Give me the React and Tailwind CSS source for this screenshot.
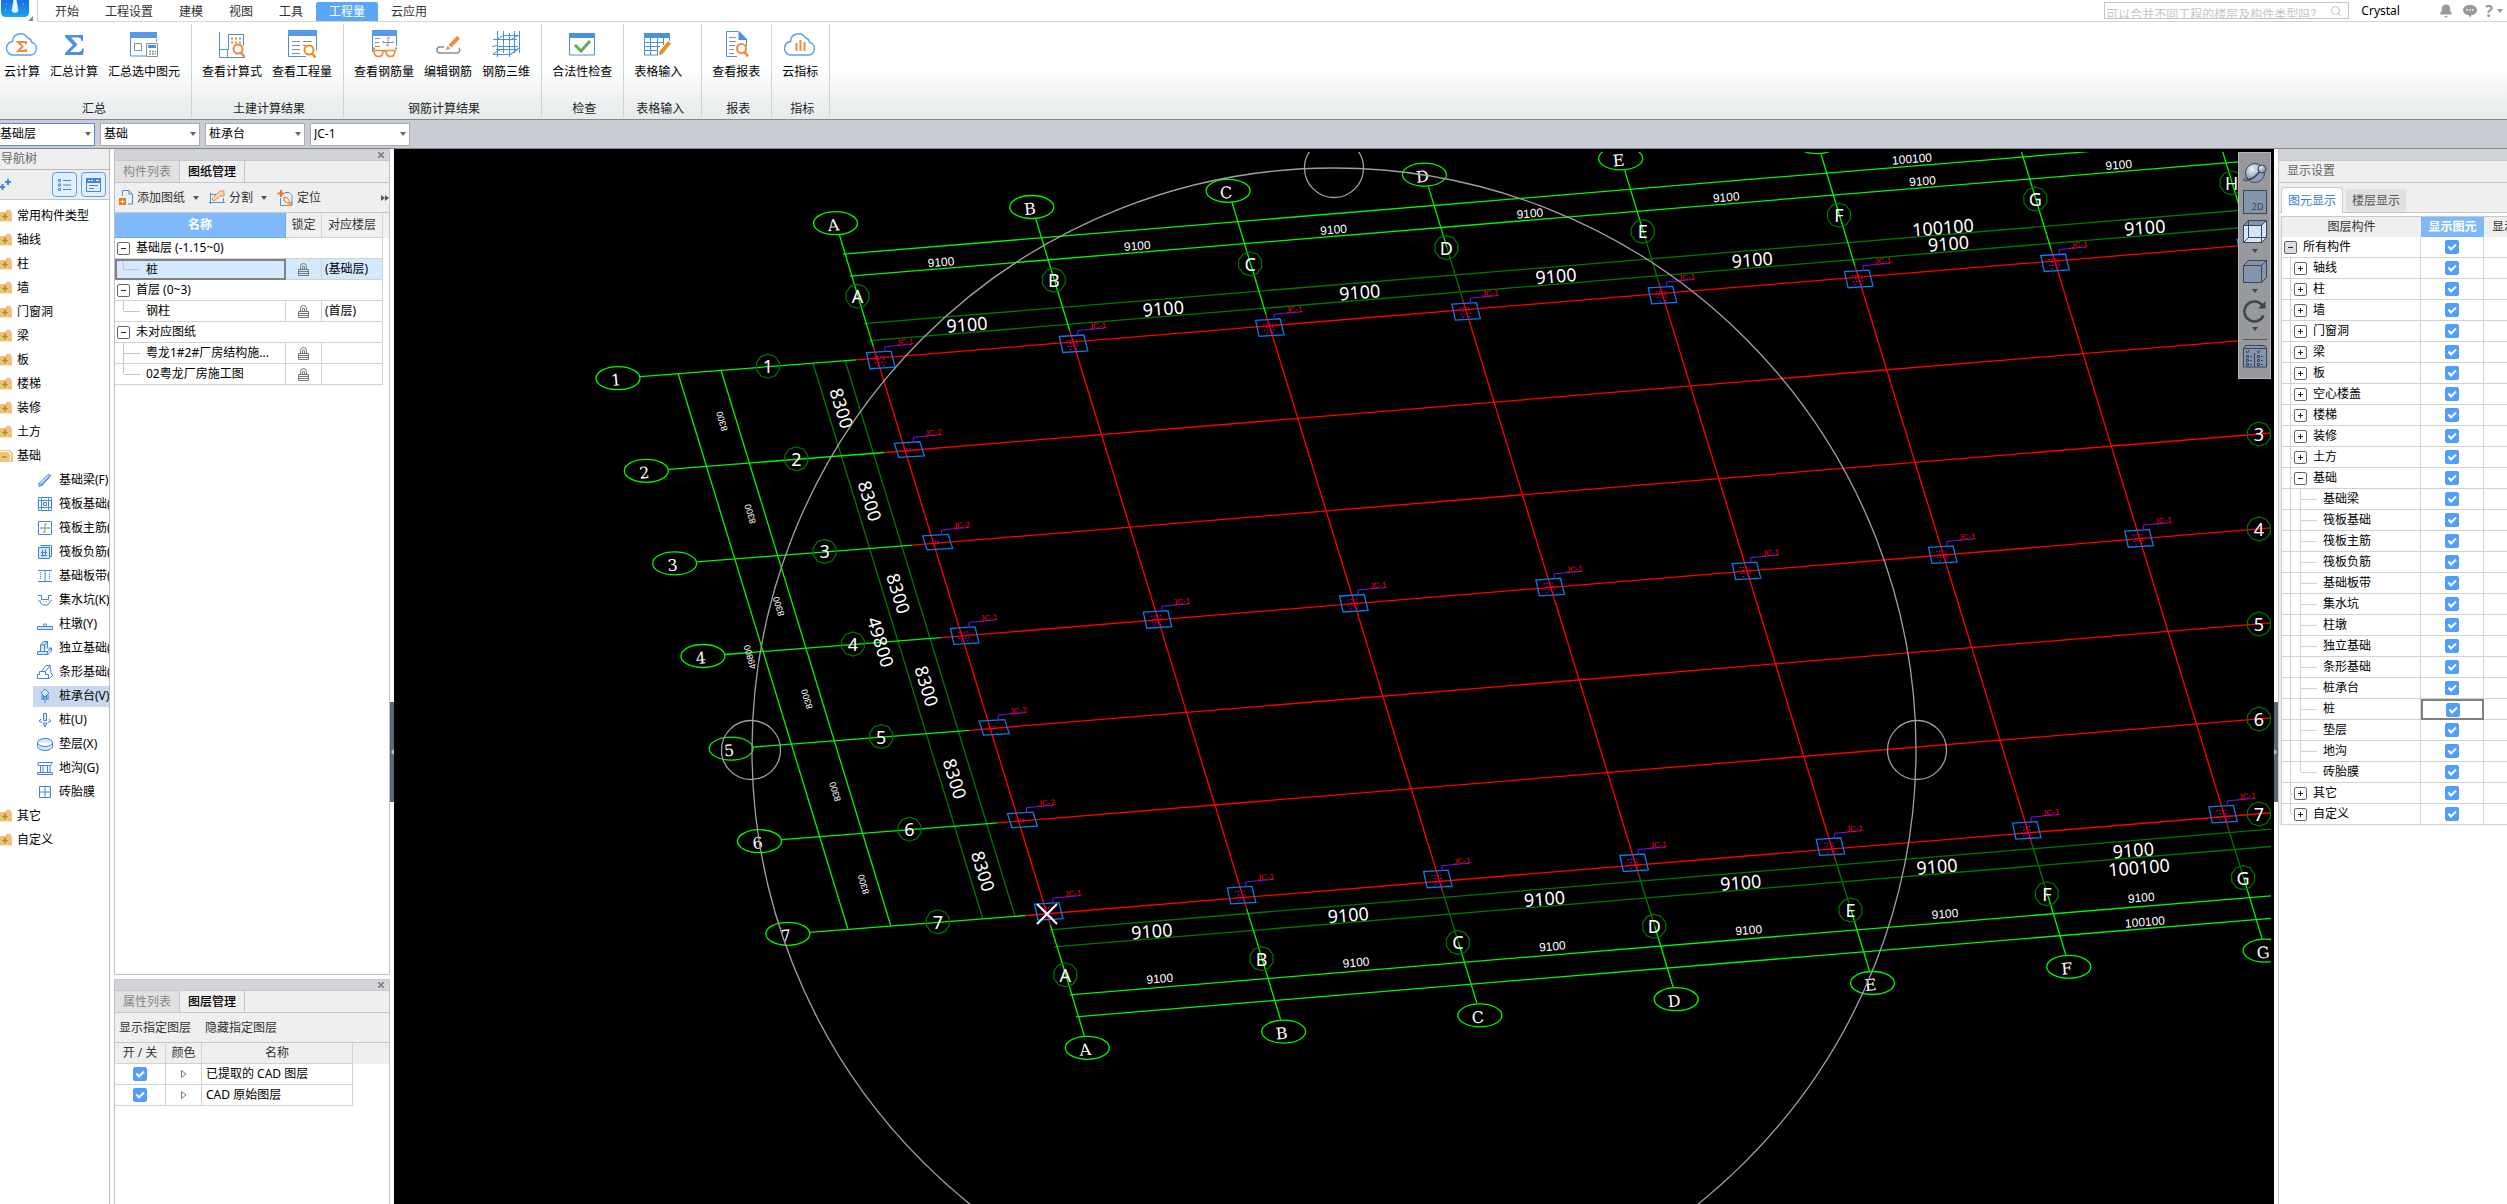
import React, { useState } from 'react';
import { Search, Bell } from 'lucide-react';

const BLUE = '#4a90e2';
const ORANGE = '#f08a3c';
const GRAY = '#8c8f94';

const menuTabs = ['开始', '工程设置', '建模', '视图', '工具', '工程量', '云应用'];

const ribbonGroups = [
  { title: '汇总', width: 'pl-1 pr-[11px]', items: [['云计算', 'cloudSum'], ['汇总计算', 'sigma'], ['汇总选中图元', 'sumSelected']] },
  { title: '土建计算结果', width: 'pl-2.5 pr-[11px]', items: [['查看计算式', 'formula'], ['查看工程量', 'quantity']] },
  { title: '钢筋计算结果', width: 'pl-2.5 pr-[11px]', items: [['查看钢筋量', 'rebar'], ['编辑钢筋', 'editRebar'], ['钢筋三维', 'rebar3d']] },
  { title: '检查', width: 'pl-2.5 pr-[11px]', items: [['合法性检查', 'check']] },
  { title: '表格输入', width: 'pl-2.5 pr-[19px]', items: [['表格输入', 'tableInput']] },
  { title: '报表', width: 'pl-2.5 pr-[11px]', items: [['查看报表', 'report']] },
  { title: '指标', width: 'pl-2.5 pr-[11px]', items: [['云指标', 'cloudIndex']] },
];

const navTop = ['常用构件类型', '轴线', '柱', '墙', '门窗洞', '梁', '板', '楼梯', '装修', '土方'];
const navChildren = [
  ['基础梁(F)', 'beam'],
  ['筏板基础(', 'raft'],
  ['筏板主筋(', 'mainBar'],
  ['筏板负筋(', 'negBar'],
  ['基础板带(', 'strip'],
  ['集水坑(K)', 'pit'],
  ['柱墩(Y)', 'pier'],
  ['独立基础(', 'isolated'],
  ['条形基础(', 'stripBase'],
  ['桩承台(V)', 'pileCap'],
  ['桩(U)', 'pile'],
  ['垫层(X)', 'cushion'],
  ['地沟(G)', 'trench'],
  ['砖胎膜', 'brick'],
];

const layerRows = [
  ['所有构件', 0],
  ['轴线', 1], ['柱', 1], ['墙', 1], ['门窗洞', 1], ['梁', 1], ['板', 1], ['空心楼盖', 1],
  ['楼梯', 1], ['装修', 1], ['土方', 1], ['基础', 1],
  ['基础梁', 2], ['筏板基础', 2], ['筏板主筋', 2], ['筏板负筋', 2], ['基础板带', 2],
  ['集水坑', 2], ['柱墩', 2], ['独立基础', 2], ['条形基础', 2], ['桩承台', 2],
  ['桩', 2], ['垫层', 2], ['地沟', 2], ['砖胎膜', 2],
  ['其它', 1], ['自定义', 1],
];

/* ---------- icons ---------- */

function Cloud() {
  return <path d="M8 27h16a6.500 6.500 0 0 0 1.500-12.800A5 5 0 0 0 21.500 10a8 8 0 0 0-15 3.500A6.700 6.700 0 0 0 8 27z" fill="none" stroke="#5aa2ee" strokeWidth="1.500" />;
}

function RibbonIcon({ name }) {
  return (
    <svg width="32" height="32" viewBox="0 0 32 32" fill="none" aria-hidden="true">
      {name === 'cloudSum' && (
        <>
          <Cloud />
          <path d="M20 16v-2h-8l4.500 4.500L12 23h8v-2" stroke={ORANGE} strokeWidth="2" />
        </>
      )}
      {name === 'sigma' && (
        <path d="M7 7h18v6h-1.500c-.5-2.500-1.500-3.500-4-3.500h-6.500l6.500 7-7.500 7.500h8c2.500 0 3.500-1 4.500-3.500H26L25 27H7v-2l8-8-8-8z" fill={BLUE} />
      )}
      {name === 'sumSelected' && (
        <>
          <path d="M2.500 4v24H18M28.500 11v3" stroke={BLUE} />
          <path d="M2 4h27v6H2z" fill="#5599ea" />
          <path d="M6.500 15.500h7v7h-7z" stroke={GRAY} />
          <path d="M18.500 15.500h11v13h-11z" fill="#fff" stroke={GRAY} />
          <path d="M20 17h8v3h-8z" fill={BLUE} />
          <path d="M21 23.500h2m1 0h2m1 0h1M21 26h2m1 0h2m1 0h1" stroke={GRAY} strokeWidth="1.500" />
        </>
      )}
      {name === 'formula' && (
        <>
          <path d="M3.500 4v25.500H29M3.500 21.500h8v8M12.500 22V6.500h15v11" stroke={BLUE} />
          <path d="M15 10.500h10M15 14.500h10" stroke={ORANGE} strokeWidth="2" strokeDasharray="2 2" />
          <circle cx="22" cy="21" r="4.500" stroke={ORANGE} strokeWidth="2" />
          <path d="M25 24.500l3.500 4.500" stroke={ORANGE} strokeWidth="2.500" />
        </>
      )}
      {name === 'quantity' && (
        <>
          <path d="M2.500 2.500h28v20M2.500 2.500v26H20" stroke={BLUE} />
          <path d="M2 2h29v6H2z" fill="#5599ea" />
          <path d="M6 13.500h8m3 0h9M6 17.500h8m3 0h3M6 21.500h8M6 25.500h8" stroke={GRAY} />
          <circle cx="23" cy="22" r="4.500" stroke="#ee9020" strokeWidth="2" />
          <path d="M26 25.500l3.500 4" stroke="#ee9020" strokeWidth="2.500" />
        </>
      )}
      {name === 'rebar' && (
        <>
          <path d="M4.500 2v22M28.500 2v16" stroke={BLUE} />
          <path d="M4 2h25v6H4z" fill="#5599ea" />
          <path d="M7 10.500h5M7 14.500h4M7 18.500h5M15 14.500h10M20 9v9m-5-3v-2m10 2v-2m-5-4l2 1m-2 8l-2-1" stroke={GRAY} />
          <path d="M5 20l2 1m22-1l-2 1M14 23h5" stroke={ORANGE} strokeWidth="2" />
          <path d="M6 22.500h9q0 6-4.500 6T6 22.500zM18 22.500h9q0 6-4.500 6t-4.500-6z" stroke={ORANGE} strokeWidth="1.700" />
        </>
      )}
      {name === 'editRebar' && (
        <>
          <path d="M12 19H8a3 3 0 0 0 0 6h17a3 3 0 0 0 2-5" stroke={GRAY} strokeWidth="1.500" />
          <path d="M25 8l3 2.500-8.500 9-3-2.500zM15.500 18l3 2.500-5 2z" fill={ORANGE} />
        </>
      )}
      {name === 'rebar3d' && (
        <path d="M7.500 3v26M13.500 3v22M24.500 3v22M29.500 3v22M19.500 5v24M3 26.500h17l8-5H6M3 11.500h24M7 11.500l6-4h17M3 26l8-5M7 18.500h21M2 19l6-2M20 27l9-7M20 12l9-5" stroke={BLUE} />
      )}
      {name === 'check' && (
        <>
          <path d="M3.500 5.500h25v21.500h-25z" stroke={BLUE} />
          <path d="M3 5h26v5H3z" fill={BLUE} />
          <path d="M9 17l6 6 9-10" stroke="#5fae57" strokeWidth="3" />
        </>
      )}
      {name === 'tableInput' && (
        <>
          <path d="M2.500 5.500h25V13M2.500 5.500v21.500H16M8.500 9v18M15.500 9v18M21.500 9v8M2 14.500h20M2 18.500h16M2 22.500h14" stroke={BLUE} />
          <path d="M2 5h26v5H2z" fill={BLUE} />
          <path d="M26 13l3 2.500-8.500 10.500-4 1.500 1-4z" fill="#ee9020" />
        </>
      )}
      {name === 'report' && (
        <>
          <path d="M18 3.500H6.500v25H17M26.500 18v-7l-7.500-7.500v8h7" stroke={BLUE} />
          <path d="M19 3.500l7.500 8H19z" fill={BLUE} />
          <path d="M9 9.500h7M9 13.500h7M9 17.500h6M9 21.500h5M9 25.500h5" stroke={GRAY} />
          <circle cx="21.500" cy="20.500" r="4.500" stroke={ORANGE} strokeWidth="2" />
          <path d="M24.500 24l3.500 4.500" stroke={ORANGE} strokeWidth="2.500" />
        </>
      )}
      {name === 'cloudIndex' && (
        <>
          <Cloud />
          <path d="M12.500 23v-8M16.500 23V12M20.500 23v-9" stroke={ORANGE} strokeWidth="2" />
        </>
      )}
    </svg>
  );
}

const treePaths = {
  beam: 'M2 11.500L11 2.500l3 1L5.500 13l-3.500 1.500zM2 11.500l3.500 1.500M5 12L13 3.500',
  raft: 'M1.500 1.500h13v13h-13zM1.500 4.500h13M1.500 11.500h13M4.500 1.500v13M11.500 1.500v13M6.500 6.500h3v3h-3z',
  mainBar: 'M1.500 1.500h13v13h-13z',
  negBar: 'M1.500 3.500h11v11h-11zM3.500 1.500h11v11h-2M4 8.500h6M4 11.500h6M5.500 6v7M8.500 5v7',
  strip: 'M1 2.500h14M1 13.500h14M8 3v10',
  pit: 'M1 3.500h3.500v4h7v-4H15M1.500 8l4 5h5l4-5',
  pier: 'M.5 10.500h15v3H.5z',
  isolated: 'M.5 11.500h10v3H.500zM3.500 11V5l3-3.500h4v7M3.500 5h4v6M7.500 5l3-3.500M10.500 11.500l4-3.500h-3M14.500 8v3l-4 3.500',
  stripBase: 'M.5 14.500v-4h2v-3h2L9 1.500h4l1 7 1.500 3-3 3zM4.500 7.500h4v3h3v4M8.500 7.500l4.500-6',
  pileCap: 'M8 1l4 4-4 4-4-4zM5 7v5M11 7v5M8 9v6M6.500 8v4M9.500 8v4',
  pile: 'M6.500 1.500h3v7h-3zM4 7l-2 2 3 1.500M12 7l2 2-3 1.500M6 11l2 4 2-4z',
  cushion: 'M.5 6.500a7.500 4 0 0 1 15 0a7.500 4 0 0 1-15 0v4a7.500 4 0 0 0 15 0v-4',
  trench: 'M1 2.500h14.500l-2 3H1zM3.500 5.500v7M6 5.500v7M10.500 5.500v7M13 5.500v7M.5 12.500h15v2H.5z',
  brick: 'M2.500 2.500h11v11h-11zM8 2.500v11M2.500 8h11',
};

function TreeIcon({ name }) {
  const filled = ['beam', 'negBar', 'isolated', 'pileCap', 'cushion', 'pier', 'pile'].includes(name);
  return (
    <svg width="16" height="16" viewBox="0 0 16 16" className="shrink-0" fill={filled ? '#d3e5fa' : 'none'} stroke="#3f86dc" aria-hidden="true">
      <path d={treePaths[name]} />
      {name === 'mainBar' && <path d="M3.500 8h9M8 3.500v9M4 7v2M12 7v2M8 4h2M8 12H6" stroke={GRAY} />}
      {name === 'strip' && <path d="M3.500 4v8M12.500 4v8" strokeDasharray="1 1" />}
      {name === 'pit' && <path d="M3 8.500l3 1.500 4-.5 3-2" stroke={GRAY} strokeDasharray="1 2" />}
      {name === 'pier' && <path d="M6.500 10V8h3v2" stroke={GRAY} />}
    </svg>
  );
}

function Folder({ open }) {
  return (
    <svg width="13" height="14" viewBox="0 0 13 14" className="shrink-0" aria-hidden="true">
      <path d={open ? 'M0 1h10l3 3v9H0z' : 'M0 3h5l1.500-2H11v2h1v9.500H0z'} fill="#ecc377" />
      {open && <path d="M0 2.500h9v2h2L10 12" stroke="#fff" fill="none" />}
      <path d={open ? 'M2 8h5' : 'M2 7.500h6M5 4.500v6'} stroke="#b9892c" strokeWidth="1.500" />
    </svg>
  );
}

function Caret({ className = '' }) {
  return (
    <svg width="6" height="4" viewBox="0 0 6 4" className={className} aria-hidden="true">
      <path d="M0 0h6L3 4z" fill="currentColor" />
    </svg>
  );
}

function Lock() {
  return (
    <svg width="11" height="13" viewBox="0 0 11 13" className="mx-auto" fill="none" stroke="#777" aria-hidden="true">
      <path d="M2.500 6V3.500a3 3 0 0 1 6 0V6M4.500 6V4a1 1 0 0 1 2 0v2M.5 6.500h10v6H.5zM0 8.500h11M0 10.500h11" />
    </svg>
  );
}

function Expander({ open, dark }) {
  return (
    <button
      type="button"
      aria-label={open ? '折叠' : '展开'}
      className={`flex size-[13px] shrink-0 items-center justify-center rounded-xs border border-[#666] ${dark ? 'bg-[#ddd]' : 'bg-white'}`}
    >
      <svg width="5" height="5" viewBox="0 0 5 5" aria-hidden="true">
        <path d={open ? 'M0 2.500h5' : 'M0 2.500h5M2.500 0v5'} stroke="#222" />
      </svg>
    </button>
  );
}

function CheckBox({ label }) {
  const [on, setOn] = useState(true);
  return (
    <span className="grid size-3.5">
      <input
        type="checkbox"
        aria-label={label}
        checked={on}
        onChange={(e) => setOn(e.target.checked)}
        className="col-start-1 row-start-1 size-3.5 appearance-none rounded-xs border border-[#539dfb] bg-white checked:bg-[#539dfb]"
      />
      {on && (
        <svg viewBox="0 0 14 14" className="pointer-events-none col-start-1 row-start-1 size-3.5" fill="none" aria-hidden="true">
          <path d="M3.500 6.500l2.500 3 5-5" stroke="#fff" strokeWidth="2" />
        </svg>
      )}
    </span>
  );
}

/* ---------- top area ---------- */

function TopBar() {
  return (
    <header className="flex h-[22px] shrink-0 items-stretch bg-white">
      <div className="flex w-[38px] items-start border-r border-[#ccc]">
        <svg width="34" height="21" viewBox="0 0 34 21" aria-label="logo">
          <defs>
            <linearGradient id="logo" x1="0" y1="0" x2="0" y2="1">
              <stop offset="0" stopColor="#1a6fe0" />
              <stop offset="1" stopColor="#18a4ee" />
            </linearGradient>
          </defs>
          <path d="M1 0h28v12q0 5-5 5H6q-5 0-5-5z" fill="url(#logo)" />
          <path d="M13.500 0h3l2 11q-3.500 4-7 0z" fill="#e4f2fd" />
          <path d="M6 4h1M23 4h1M5 10h1" stroke="#9cd0fa" />
          <path d="M33 16v5h-5z" fill="#888" />
        </svg>
      </div>
      <nav className="flex grow items-end border-b border-[#d5d5d5] pl-1">
        {menuTabs.map((tab) => (
          <button
            type="button"
            key={tab}
            className={`h-[19px] px-[13px] leading-[18px] ${tab === '工程量' ? 'rounded-t-xs bg-[#5aa7f8] text-white' : 'text-[#333]'}`}
          >
            {tab}
          </button>
        ))}
      </nav>
      <div className="flex items-center border-b border-[#d5d5d5] pr-1 text-[#999]">
        <div className="flex h-[17px] w-[245px] items-center overflow-hidden border border-[#c4c4c4] bg-white pr-1.5">
          <input
            aria-label="搜索"
            placeholder="可以合并不同工程的楼层及构件类型吗？"
            className="h-[15px] min-w-0 grow pt-2 pl-px leading-4 outline-none placeholder:text-[#c4c4c4]"
          />
          <Search size={12} strokeWidth={2} className="text-[#bbb]" />
        </div>
        <span className="w-[90px] pl-3 text-black">Crystal</span>
        <Bell size={14} fill="#999" className="mr-2.5" />
        <svg width="14" height="14" viewBox="0 0 14 14" className="mr-2" aria-hidden="true">
          <path d="M7 1c4 0 7 2 7 5s-3 5-5.500 5L7 13.500 5.500 11C3 11 0 9 0 6s3-5 7-5z" fill="#999" />
          <path d="M3.500 6h1.500m1.300 0h1.500m1.300 0h1.500" stroke="#fff" strokeWidth="1.500" />
        </svg>
        <span className="text-base leading-5 font-bold">?</span>
        <Caret className="ml-1" />
      </div>
    </header>
  );
}

function Ribbon() {
  return (
    <div className="flex h-[98px] shrink-0 border-b border-[#85888e] bg-linear-to-b from-white from-45% to-[#e6eaea] pt-0.5 pb-0.5">
      {ribbonGroups.map((group) => (
        <section key={group.title} className={`flex flex-col justify-between border-r border-[#d0d2d4] ${group.width}`}>
          <div className="flex gap-2.5 pt-1">
            {group.items.map(([label, icon]) => (
              <button type="button" key={label} className="flex flex-col items-center gap-1 whitespace-nowrap text-black">
                <RibbonIcon name={icon} />
                <span className="leading-4">{label}</span>
              </button>
            ))}
          </div>
          <h2 className="-mr-1 text-center leading-4 text-[#222]">{group.title}</h2>
        </section>
      ))}
    </div>
  );
}

function FloorSelectors() {
  const fields = [['楼层', '基础层'], ['类别', '基础'], ['构件类型', '桩承台'], ['构件', 'JC-1']];
  return (
    <div className="flex h-[29px] shrink-0 items-center gap-[5px] border-b border-[#85888e] bg-[#c9ccd2]">
      {fields.map(([name, value], i) => (
        <div key={name} className="grid items-center">
          <select
            aria-label={name}
            className={`col-start-1 row-start-1 h-[23px] appearance-none border bg-white text-black ${i === 0 ? 'w-[95px] border-l-0 border-[#5b87de] pl-0' : 'w-[100px] border-[#a9abaf] pl-[3px]'}`}
          >
            <option>{value}</option>
          </select>
          <Caret className="pointer-events-none col-start-1 row-start-1 mr-1 justify-self-end text-[#666]" />
        </div>
      ))}
    </div>
  );
}

/* ---------- left side ---------- */

function NavTree() {
  return (
    <aside className="flex w-[110px] shrink-0 flex-col overflow-hidden border-r border-[#bbb] bg-white">
      <h2 className="h-[21px] shrink-0 border-b border-[#bbb] bg-[#eee] pl-px leading-5 text-[#666]">导航树</h2>
      <div className="flex h-[30px] shrink-0 items-center justify-end gap-1 border-b border-[#c4c4c4] bg-[#eee] pr-[3px]">
        <svg width="12" height="14" viewBox="0 0 12 14" className="mr-auto" aria-hidden="true">
          <path d="M5 4h6M8 1v6M0 9h5M2.500 6v6" stroke="#3f86dc" strokeWidth="2" />
        </svg>
        <button type="button" aria-label="列表" className="flex size-[25px] items-center justify-center rounded-sm border border-[#539dfb] bg-[#e2effd]">
          <svg width="13" height="14" viewBox="0 0 13 14" fill="none" stroke="#3f86dc" aria-hidden="true">
            <path d="M.5 1.500h2v2h-2zM.5 6h2v2h-2zM.5 10.500h2v2h-2zM5 2.500h8M5 7h8M5 11.500h8" />
          </svg>
        </button>
        <button type="button" aria-label="窗口" className="flex size-[25px] items-center justify-center rounded-sm border border-[#539dfb] bg-[#e2effd]">
          <svg width="15" height="14" viewBox="0 0 15 14" fill="none" stroke="#3f86dc" aria-hidden="true">
            <path d="M.5 .5h14v13H.5zM3 7.500h9M3 10.500h5" />
            <path d="M0 0h15v5H0z" fill="#3f86dc" stroke="none" />
            <path d="M2 2.500h2m1 0h2m3 0h3" stroke="#fff" />
          </svg>
        </button>
      </div>
      <ul className="pt-1 whitespace-nowrap text-black">
        {navTop.map((item) => (
          <li key={item} className="flex h-6 items-center gap-1"><Folder />{item}</li>
        ))}
        <li>
          <div className="flex h-6 items-center gap-1"><Folder open />基础</div>
          <ul>
            {navChildren.map(([label, icon]) => (
              <li key={icon} className="flex h-6 items-center pl-[33px]">
                <span className={`flex h-[21px] grow items-center gap-1.5 pl-1 ${icon === 'pileCap' ? 'bg-[#c8d8ef]' : ''}`}>
                  <TreeIcon name={icon} />{label}
                </span>
              </li>
            ))}
          </ul>
        </li>
        <li className="flex h-6 items-center gap-1"><Folder />其它</li>
        <li className="flex h-6 items-center gap-1"><Folder />自定义</li>
      </ul>
    </aside>
  );
}

function PanelHead({ tabs }) {
  return (
    <>
      <div className="flex h-3 shrink-0 items-center justify-end border-y border-t-[#c6c8ce] border-b-[#c6c8ce] bg-[#d3d4da] pr-[5px]">
        <button type="button" aria-label="关闭">
          <svg width="6" height="6" viewBox="0 0 6 6" aria-hidden="true"><path d="M0 0l6 6M6 0L0 6" stroke="#777" strokeWidth="1.500" /></svg>
        </button>
      </div>
      <div className="flex h-[22px] shrink-0 border-b border-[#c4c6cc] bg-[#efefef]">
        {tabs.map((tab, i) => (
          <button type="button" key={tab} className={`w-[65px] border-r border-[#c4c6cc] ${i === 0 ? 'bg-[#e1e1e1] text-[#888]' : 'font-medium text-black'}`}>
            {tab}
          </button>
        ))}
      </div>
    </>
  );
}

const cell = 'h-[21px] border-r border-b border-[#d2d2d2]';

function DrawingTable() {
  const groups = [
    { title: '基础层 (-1.15~0)', rows: [['桩', '(基础层)']] },
    { title: '首层 (0~3)', rows: [['钢柱', '(首层)']] },
    { title: '未对应图纸', rows: [['粤龙1#2#厂房结构施...', ''], ['02粤龙厂房施工图', '']] },
  ];
  return (
    <div className="bg-linear-to-b from-[#efefef] from-[25px] to-white to-[25px]">
      <table className="w-[268px] table-fixed border-separate border-spacing-0 text-black">
        <colgroup><col className="w-[171px]" /><col className="w-9" /><col className="w-[61px]" /></colgroup>
        <thead>
          <tr className="text-[#333]">
            <th className="h-[25px] border-r border-b border-[#6fa9ec] bg-[#7fb9fb] text-white">名称</th>
            <th className="border-r border-b border-[#d2d2d2] bg-[#efefef] font-normal">锁定</th>
            <th className="border-r border-b border-[#d2d2d2] bg-[#efefef] font-normal">对应楼层</th>
          </tr>
        </thead>
        {groups.map((group, g) => (
          <tbody key={group.title}>
            <tr>
              <td colSpan={3} className={cell}>
                <div className="flex items-center gap-1.5 pl-0.5"><Expander open />{group.title}</div>
              </td>
            </tr>
            {group.rows.map(([name, floor], i) => (
              <tr key={name} className={g === 0 ? 'bg-[#d5e9fe]' : ''}>
                <td className={g === 0 ? 'h-[21px] border-2 border-[#808080]' : cell}>
                  <div className={`flex items-stretch leading-4 whitespace-nowrap ${g === 0 ? 'h-[17px] pl-1.5' : 'h-5 pl-2'}`}>
                    <span className={`w-px bg-[#c4c4c4] ${i === group.rows.length - 1 ? 'h-1/2' : ''}`} />
                    <span className="h-px w-4 self-center bg-[#c4c4c4]" />
                    <span className="self-center pl-1.5">{name}</span>
                  </div>
                </td>
                <td className={cell}><Lock /></td>
                <td className={`${cell} pl-[3px] leading-4`}>{floor}</td>
              </tr>
            ))}
          </tbody>
        ))}
      </table>
    </div>
  );
}

function DrawingPanel() {
  return (
    <section className="flex min-h-0 grow flex-col border-x border-b border-[#bfc0c4] bg-white">
      <PanelHead tabs={['构件列表', '图纸管理']} />
      <div className="flex h-[30px] shrink-0 items-center border-b border-[#c8c8c8] bg-[#efefef] pl-1 text-[#333]">
        <button type="button" className="flex items-center gap-1">
          <svg width="14" height="15" viewBox="0 0 14 15" fill="none" aria-hidden="true">
            <path d="M3.500 6V.5H10l3.500 3.500v10H9M10 .5V4h3" stroke={BLUE} />
            <path d="M0 8h7v7H0z" fill="#ee7623" /><path d="M1.500 11.500h4M3.500 9.500v4" stroke="#fff" />
          </svg>
          添加图纸<Caret className="ml-1 text-[#555]" />
        </button>
        <button type="button" className="ml-2.5 flex items-center gap-1">
          <svg width="16" height="15" viewBox="0 0 16 15" fill="none" aria-hidden="true">
            <path d="M1.500 12.500v-8h8M14.500 8v4.500H1.500M0 12.500h16M1.500 14V3" stroke={BLUE} />
            <path d="M3 9l6-6 2-2h4v5h-4L5 11z" fill="#fbd9b8" stroke={ORANGE} />
          </svg>
          分割<Caret className="ml-1 text-[#555]" />
        </button>
        <button type="button" className="ml-2.5 flex items-center gap-1">
          <svg width="16" height="16" viewBox="0 0 16 16" fill="none" aria-hidden="true">
            <path d="M8 2.500h4l3 3v9.500M3.500 8v7.500h4" stroke={BLUE} />
            <path d="M4 0v7M.5 3.500h7" stroke="#ee7623" strokeWidth="2" />
            <path d="M7 7.500a4 4 0 0 1 5 5h2.500v3H7M7 7v4l7 4" stroke="#ee7623" />
          </svg>
          定位
        </button>
        <svg width="8" height="6" viewBox="0 0 8 6" className="ml-auto" aria-label="更多"><path d="M0 0l4 3-4 3zM4 0l4 3-4 3z" fill="#555" /></svg>
      </div>
      <DrawingTable />
    </section>
  );
}

function LayerPanel() {
  return (
    <section className="mt-1 flex h-[225px] shrink-0 flex-col border-x border-[#bfc0c4] bg-white">
      <PanelHead tabs={['属性列表', '图层管理']} />
      <div className="flex h-[30px] shrink-0 items-center gap-3.5 border-b border-[#c8c8c8] bg-[#efefef] pl-1 text-[#333]">
        <button type="button">显示指定图层</button>
        <button type="button">隐藏指定图层</button>
      </div>
      <div className="bg-linear-to-b from-[#efefef] from-[21px] to-white to-[21px]">
        <table className="w-[238px] table-fixed border-separate border-spacing-0 text-black">
          <colgroup><col className="w-[51px]" /><col className="w-9" /><col className="w-[151px]" /></colgroup>
          <thead>
            <tr className="text-[#333]">
              {['开 / 关', '颜色', '名称'].map((h) => <th key={h} className={`${cell} bg-[#efefef] leading-4 font-normal`}>{h}</th>)}
            </tr>
          </thead>
          <tbody>
            {['已提取的 CAD 图层', 'CAD 原始图层'].map((name) => (
              <tr key={name}>
                <td className={cell}><div className="flex justify-center"><CheckBox label={name} /></div></td>
                <td className={cell}>
                  <svg width="6" height="8" viewBox="0 0 6 8" className="mx-auto" aria-hidden="true"><path d="M.5 .5l4.500 3.500-4.500 3.500z" fill="none" stroke="#777" /></svg>
                </td>
                <td className={`${cell} pl-1 leading-4`}>{name}</td>
              </tr>
            ))}
          </tbody>
        </table>
      </div>
    </section>
  );
}

function Splitter({ flip }) {
  return (
    <div className="flex w-1 shrink-0 flex-col bg-white">
      <div className="flex-[11]" />
      <button type="button" aria-label="收起" className="flex h-[100px] items-center bg-[#5f6875]">
        <svg width="4" height="6" viewBox="0 0 4 6" aria-hidden="true"><path d={flip ? 'M0 0l3 3-3 3z' : 'M4 0L1 3l3 3z'} fill="#c8ccd2" /></svg>
      </button>
      <div className="flex-[8]" />
    </div>
  );
}

/* ---------- drawing ---------- */

// grid intersection of column c and row r
const at = (c, r) => [877 + 196.3 * c + 28.3 * r, 358.2 - 16.2 * c + 92.6 * r];
const off = ([x, y], dx, dy) => [x + dx, y + dy];
const ROW_ANGLE = -4.7;
const COL_ANGLE = 73;
const cols = ['A', 'B', 'C', 'D', 'E', 'F', 'G', 'H'];
const rows = ['1', '2', '3', '4', '5', '6', '7'];
const LIME = '#00f800';
const DARK = '#007800';
const RED = '#ff0000';

function Line({ from, to, stroke }) {
  return <line x1={from[0]} y1={from[1]} x2={to[0]} y2={to[1]} stroke={stroke} strokeWidth="1.300" />;
}

function Label({ p, size, angle = 0, font = 'Noto Sans', fill = '#fff', children }) {
  return (
    <text
      x={p[0]} y={p[1]} fontSize={size} fill={fill} textAnchor="middle" dominantBaseline="central"
      transform={`rotate(${angle} ${p[0]} ${p[1]})`} fontFamily={`"${font}", "Liberation Sans", sans-serif`}
    >
      {children}
    </text>
  );
}

function InnerBubble({ p, name }) {
  const points = [...Array(10)].map((_, i) => {
    const a = (i * Math.PI) / 5 + 0.3;
    return `${p[0] + 12 * Math.cos(a)},${p[1] + 12 * Math.sin(a)}`;
  });
  return (
    <g>
      <polygon points={points.join(' ')} fill="none" stroke={DARK} strokeWidth="1.200" />
      <Label p={p} size={18}>{name}</Label>
    </g>
  );
}

function OuterBubble({ p, name }) {
  return (
    <g>
      <ellipse cx={p[0]} cy={p[1]} rx="22" ry="11.500" fill="none" stroke={LIME} strokeWidth="1.300" />
      <Label p={off(p, -2, 2)} size={16} angle={-5} font="DejaVu Serif">{name}</Label>
    </g>
  );
}

function PileCap({ c, r }) {
  const single = c === 0 && ![0, 3, 6].includes(r);
  const [x, y] = single ? off(at(c, r), 0, -2) : off(at(c, r), (c ? -3.5 : 0) - r * 0.3, -r * 0.7);
  return (
    <g transform={`translate(${x} ${y})`} fill="none">
      <path d={single ? 'M-11-5.500L14.500-7 19 7l-25.500 1.500z' : 'M-10.500-5.500L14-7l4 16-25 1.500z'} stroke="#0a7cf0" strokeWidth="1.300" />
      <path
        d={single ? 'M1 0h5M1 2h5' : 'M-3-1.500l10-.6M0 1.500h2M6 1.200h2M-2 4.500l11-.6M0 7.500h2M6 7h2'}
        stroke="#d800d8" strokeDasharray="1.500 1.500"
      />
      <path d="M8-6.500v-5l27-2.500" stroke="#7a10f0" />
      <Label p={[28, -16]} size={8} angle={ROW_ANGLE} font="Liberation Sans" fill={RED}>{single ? 'JC-2' : 'JC-1'}</Label>
    </g>
  );
}

function GridDrawing() {
  const caps = [];
  for (let c = 0; c < 8; c++) [0, 3, 6].forEach((r) => caps.push([c, r]));
  [1, 2, 4, 5].forEach((r) => caps.push([0, r]));

  return (
    <svg className="size-full" viewBox="397 152 1874 1052" preserveAspectRatio="xMinYMin slice" aria-label="轴网">
      {/* left dimension lines */}
      {[[-199, 15, LIME], [-156, 12, LIME], [-64, 5, DARK], [-32, 2, DARK]].map(([dx, dy, color]) => (
        <Line key={dx} from={off(at(0, 0), dx, dy)} to={off(at(0, 6), dx, dy)} stroke={color} />
      ))}
      {/* top and bottom dimension lines */}
      {[[-32, -104, LIME], [-25, -82, LIME], [-11, -34.500, DARK], [-5, -17.500, DARK]].map(([dx, dy, color]) => (
        <Line key={dy} from={off(at(0, 0), dx - 2, dy)} to={off(at(8, 0), dx, dy)} stroke={color} />
      ))}
      {[[5, 16, DARK], [9, 33, DARK], [25, 81, LIME], [31, 103, LIME]].map(([dx, dy, color]) => (
        <Line key={dy} from={off(at(0, 6), dx - 2, dy)} to={off(at(8, 6), dx, dy)} stroke={color} />
      ))}

      {rows.map((name, r) => (
        <g key={name}>
          <Line from={off(at(0, r), -237, 18.500)} to={off(at(0, r), -21, 1.700)} stroke={LIME} />
          <Line from={off(at(0, r), -21, 1.700)} to={at(8, r)} stroke={RED} />
          <OuterBubble p={off(at(0, r), -259, 20)} name={name} />
          <InnerBubble p={off(at(0, r), -109, 8)} name={name} />
          {r > 1 && <InnerBubble p={[2259, 434 + (r - 2) * 95]} name={name} />}
          {r < 6 && <Label p={off(at(0, r), -35, 50)} size={18} angle={COL_ANGLE}>8300</Label>}
          {r < 6 && <Label p={off(at(0, r), -155, 63)} size={9} angle={COL_ANGLE - 180} font="Liberation Sans Narrow">8300</Label>}
        </g>
      ))}

      {cols.map((name, c) => (
        <g key={name}>
          <Line from={off(at(c, 0), -37.500, -123)} to={off(at(c, 0), -19, -62)} stroke={LIME} />
          <Line from={off(at(c, 0), -19, -62)} to={off(at(c, 0), -3.500, -11)} stroke={c === 3 || c === 4 ? DARK : LIME} />
          <Line from={off(at(c, 0), -3.500, -11)} to={off(at(c, 6), 3.500, 11)} stroke={RED} />
          <Line from={off(at(c, 6), 3.500, 11)} to={off(at(c, 6), 19, 61)} stroke={c > 1 ? DARK : LIME} />
          <Line from={off(at(c, 6), 19, 61)} to={off(at(c, 6), 37.500, 122)} stroke={LIME} />
          <OuterBubble p={off(at(c, 0), -41.500, -135)} name={name} />
          <OuterBubble p={off(at(c, 6), 40.500, 134)} name={name} />
          <InnerBubble p={off(at(c, 0), -19.500, -62)} name={name} />
          <InnerBubble p={off(at(c, 6), 18.500, 61)} name={name} />
          <Label p={off(at(c, 0), 90, -34)} size={18} angle={ROW_ANGLE}>9100</Label>
          <Label p={off(at(c, 0), 64, -96)} size={12} angle={ROW_ANGLE} font="Liberation Sans">9100</Label>
          {c < 6 && <Label p={off(at(c, 6), 105, 17)} size={18} angle={ROW_ANGLE}>9100</Label>}
          {c < 6 && <Label p={off(at(c, 6), 113, 65)} size={12} angle={ROW_ANGLE} font="Liberation Sans">9100</Label>}
        </g>
      ))}

      <Label p={[1943, 227]} size={18} angle={ROW_ANGLE}>100100</Label>
      <Label p={[1912, 159]} size={12} angle={ROW_ANGLE} font="Liberation Sans">100100</Label>
      <Label p={[2139, 867]} size={18} angle={ROW_ANGLE}>100100</Label>
      <Label p={[2145, 922]} size={12} angle={ROW_ANGLE} font="Liberation Sans">100100</Label>
      <Label p={[881, 642]} size={18} angle={COL_ANGLE}>49800</Label>
      <Label p={[750, 657]} size={9} angle={COL_ANGLE - 180} font="Liberation Sans Narrow">49800</Label>

      {caps.map(([c, r]) => <PileCap key={`${c}-${r}`} c={c} r={r} />)}

      {/* orbit ring with its handles */}
      <g fill="none" stroke="#a0a0a0" strokeWidth="1.300">
        <circle cx="1334" cy="750" r="582" />
        <circle cx="751" cy="750" r="29.500" />
        <circle cx="1917" cy="750" r="29.500" />
        <circle cx="1334" cy="168" r="29.500" />
      </g>
      <path d="M1037 904l20 20M1057 904l-20 20" stroke="#fff" strokeWidth="2" />
    </svg>
  );
}

function ViewToolbar() {
  const frame = { width: 24, height: 24, viewBox: '0 0 24 24', fill: 'none', stroke: '#3a4454', 'aria-hidden': true };
  return (
    <div className="absolute top-[3px] right-[3px] flex h-[227px] w-[33px] flex-col items-center border border-[#b4b6b9] bg-[#97999d] pt-2 text-[#3a4454]">
      <button type="button" aria-label="动态观察">
        <svg {...frame}>
          <defs>
            <radialGradient id="ball" cx="0.35" cy="0.3"><stop offset="0" stopColor="#eef4fa" /><stop offset="1" stopColor="#8ba0b8" /></radialGradient>
          </defs>
          <circle cx="12" cy="12" r="9.500" fill="url(#ball)" />
          <path d="M2 19q9 1 17-12" strokeWidth="1.500" />
          <circle cx="19" cy="8" r="4" fill="url(#ball)" />
          <path d="M0 19l4-3v4z" fill="#aab" />
        </svg>
      </button>
      <button type="button" className="mt-[5px] flex size-6 items-end justify-end border border-[#3a4454] bg-[#8395ad] pr-0.5 text-[9px] leading-3">2D</button>
      <button type="button" aria-label="线框" className="mt-[5px]">
        <svg {...frame}>
          <path d="M.5 6.500l5-5h18v17l-5 5H.5z" fill="#8395ad" />
          <path d="M.5 6.500h18v17H.5zM18.500 6.500l5-5v17l-5 5z" fill="#d3e6fc" />
          <path d="M5.500 1.500v17h18M5.500 18.500l-5 5" />
        </svg>
      </button>
      <Caret className="my-1.5" />
      <button type="button" aria-label="实体">
        <svg {...frame}>
          <path d="M.5 6.500l5-5h18v17l-5 5H.5zM.5 6.500h18v17M18.500 6.500l5-5" fill="#8395ad" />
        </svg>
      </button>
      <Caret className="my-1.5" />
      <button type="button" aria-label="旋转">
        <svg {...frame}>
          <path d="M20.500 16.500A10 10 0 1 1 19 6" strokeWidth="2.500" />
          <path d="M22.500 2v7.500H15z" fill="#3a4454" stroke="none" />
        </svg>
      </button>
      <Caret className="my-1" />
      <button type="button" aria-label="显示设置" className="mt-1 border-t border-[#55585e] pt-1">
        <svg {...frame}>
          <path d="M.5 4.500l2-3h19l2 3v18.500H.5zM.5 4.500h23" fill="#8395ad" />
          <path d="M3 7l1.500 2L6 6M14 7l1.500 2L17 6M3.500 11.500h2v2h-2zM3.500 15.500h2v2h-2zM3.500 19.500h2v2h-2zM14.500 11.500h2v2h-2zM14.500 15.500h2v2h-2zM14.500 19.500h2v2h-2zM7 12.500h2M7 16.500h2M7 20.500h2M18 12.500h2M18 16.500h2M18 20.500h2M11.500 9v13" />
        </svg>
      </button>
    </div>
  );
}

/* ---------- right side ---------- */

function LayerRow({ name, level, index }) {
  const line = 'w-px bg-[#d2d2d2]';
  const open = name === '所有构件' || name === '基础';
  const last = index === layerRows.length - 1;
  return (
    <tr>
      <td className={cell}>
        <div className="flex h-5 items-center leading-4 whitespace-nowrap">
          {level === 0 && <span className="mr-1.5 ml-0.5"><Expander open dark /></span>}
          {level > 0 && (
            <span className="ml-2 flex w-[3px] items-stretch self-stretch">
              <span className={`${line} ${last ? 'h-1/2' : ''}`} />
              {level === 1 && <span className="h-px w-0.5 self-center bg-[#d2d2d2]" />}
            </span>
          )}
          {level === 1 && <span className="mr-1.5 ml-px"><Expander open={open} /></span>}
          {level === 2 && (
            <>
              <span className={`ml-[7px] self-stretch ${line} ${name === '砖胎膜' ? 'h-1/2' : ''}`} />
              <span className="mr-1.5 h-px w-4 bg-[#d2d2d2]" />
            </>
          )}
          {name}
        </div>
      </td>
      <td className={name === '桩' ? 'h-[21px] border-2 border-[#808080]' : cell}>
        <div className="flex justify-center"><CheckBox label={name} /></div>
      </td>
      <td className={cell} />
    </tr>
  );
}

function DisplayPanel() {
  return (
    <aside className="flex w-[229px] shrink-0 flex-col overflow-hidden border-l border-[#c6c8ce] bg-white">
      <div className="h-3 shrink-0 border-b border-[#c6c8ce] bg-[#d3d4da]" />
      <h2 className="h-[22px] shrink-0 border-b border-[#c6c8ce] bg-[#efefef] pl-2 leading-5 text-[#666]">显示设置</h2>
      <div className="flex h-[30px] shrink-0 items-end gap-[3px] border-b border-[#c6c8ce] bg-[#efefef] pl-0.5">
        <button type="button" className="-mb-px h-[26px] w-[62px] rounded-t border border-b-0 border-[#c6c8ce] bg-white text-[#2f80e0]">图元显示</button>
        <button type="button" className="h-[23px] w-[60px] rounded-t bg-[#e0e0e0] text-[#555]">楼层显示</button>
      </div>
      <div className="border-l-2 border-[#efefef] pt-[3px]">
        <table className="w-[266px] table-fixed border-separate border-spacing-0 border-t border-l border-[#c6c8ce] text-black">
          <colgroup><col className="w-[139px]" /><col className="w-[63px]" /><col className="w-[63px]" /></colgroup>
          <thead>
            <tr>
              <th className="h-5 bg-[#efefef] leading-4 font-normal text-[#333]">图层构件</th>
              <th className="bg-[#7fb9fb] leading-4 text-white">显示图元</th>
              <th className="bg-[#efefef] pl-2 text-left leading-4 font-normal whitespace-nowrap text-[#333]">显示名称</th>
            </tr>
          </thead>
          <tbody>
            {layerRows.map(([name, level], i) => <LayerRow key={name + i} name={name} level={level} index={i} />)}
          </tbody>
        </table>
      </div>
    </aside>
  );
}

export default function App() {
  return (
    <div className="flex h-screen flex-col overflow-hidden bg-white font-['Noto_Sans','Noto_Sans_CJK_SC',sans-serif] text-xs">
      <TopBar />
      <Ribbon />
      <FloorSelectors />
      <div className="flex min-h-0 grow">
        <NavTree />
        <div className="ml-1 flex w-[276px] shrink-0 flex-col">
          <DrawingPanel />
          <LayerPanel />
        </div>
        <Splitter />
        <main className="relative min-w-0 grow bg-black px-[3px] pt-[3px]">
          <GridDrawing />
          <ViewToolbar />
        </main>
        <Splitter flip />
        <DisplayPanel />
      </div>
    </div>
  );
}
